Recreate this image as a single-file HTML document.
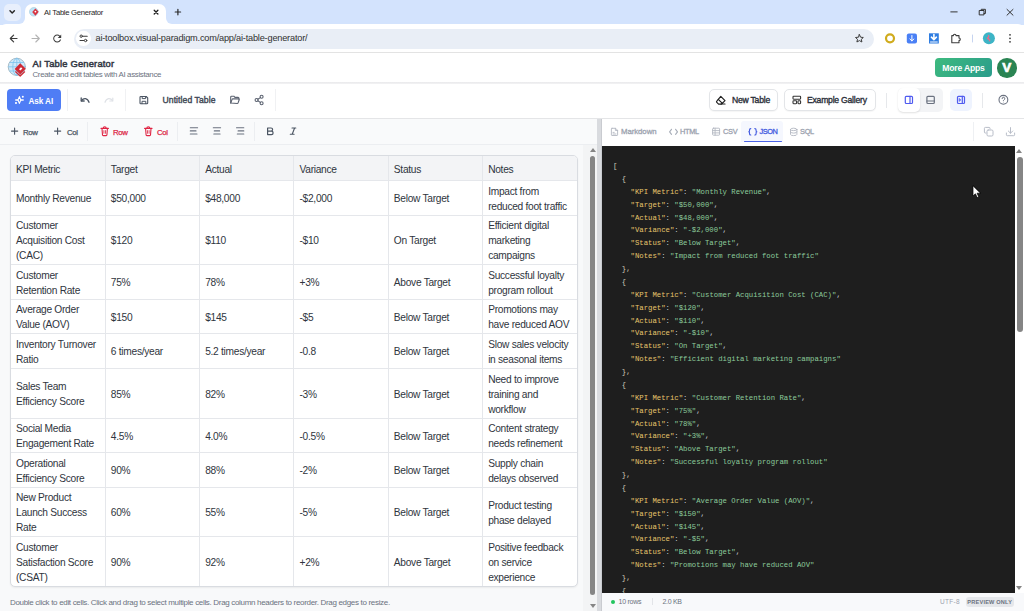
<!DOCTYPE html>
<html><head><meta charset="utf-8">
<style>
*{box-sizing:border-box;margin:0;padding:0}
html,body{width:1024px;height:611px;overflow:hidden;background:#fff;font-family:"Liberation Sans",sans-serif;color:#1f2937}
.abs{position:absolute}
svg{display:block}
/* chrome */
#tabstrip{left:0;top:0;width:1024px;height:25px;background:#d3e3fd}
#tabdd{left:4px;top:4px;width:16.5px;height:16.5px;border-radius:5px;background:#e8effc}
#tab{left:25px;top:4px;width:141px;height:20px;background:#fff;border-radius:7px 7px 0 0}
#tabtitle{left:44px;top:7.5px;font-size:7.7px;letter-spacing:-.3px;color:#1f1f1f;white-space:nowrap}
#toolbar{left:0;top:24px;width:1024px;height:28px;background:#fff;border-radius:6px 6px 0 0}
#omni{left:74px;top:29px;width:800px;height:19.5px;border-radius:10px;background:#e9eef6}
#url{left:95.5px;top:33px;font-size:9.2px;letter-spacing:-.2px;color:#303030;white-space:nowrap}
#chromeline{left:0;top:52px;width:1024px;height:1px;background:#e3e3e3}
/* app header */
#appheader{left:0;top:53px;width:1024px;height:29px;background:#fff}
#hdrshadow{left:0;top:82px;width:1024px;height:2px;background:linear-gradient(#e9e9eb,#f3f3f4)}
#title{left:32.5px;top:58px;font-size:9.4px;letter-spacing:.18px;font-weight:normal;-webkit-text-stroke:.5px currentColor;color:#343a46;white-space:nowrap}
#subtitle{left:32.5px;top:69.5px;font-size:7.9px;letter-spacing:-.33px;color:#6b7280;white-space:nowrap}
#moreapps{left:935px;top:58px;width:57px;height:19px;border-radius:4px;background:linear-gradient(135deg,#3dba7e,#2a9c8c);color:#fff;font-size:8.6px;letter-spacing:-.2px;font-weight:bold;text-align:center;line-height:20.5px}
#avatar{left:997px;top:58px;width:19.5px;height:19.5px;border-radius:50%;background:#2e8654;color:#fff;font-weight:bold;font-size:13.5px;-webkit-text-stroke:.7px #fff;text-align:center;line-height:20.5px;background:#2a8453}
/* app toolbar */
#apptb{left:0;top:84px;width:1024px;height:33.5px;background:#fff}
#tbline{left:0;top:117.5px;width:1024px;height:1px;background:#e4e5e7}
#askai{left:7px;top:89px;width:54px;height:22px;border-radius:4px;background:#4f7df5;color:#fff;font-size:8.2px;letter-spacing:-.1px;font-weight:bold;line-height:25px;padding-left:21.5px}
.vsep{width:1px;background:#eceef1}
.btnw{height:21.5px;border:1px solid #e3e5e8;border-radius:5px;background:#fff;box-shadow:0 1px 1px rgba(0,0,0,.04);font-size:8.6px;letter-spacing:-.22px;font-weight:normal;-webkit-text-stroke:.35px currentColor;color:#2b303a;line-height:21px;white-space:nowrap}
/* left panel */
#lefttb{left:0;top:118.5px;width:597px;height:26px;background:#f9fafb}
#lefttbline{left:0;top:144px;width:597px;height:1px;background:#eceef1}
#leftbody{left:0;top:145px;width:597px;height:466px;background:#f8f9fa}
.tbt{font-size:7.8px;letter-spacing:-.3px;font-weight:normal;-webkit-text-stroke:.25px currentColor;color:#4b5563;white-space:nowrap;top:127.5px}
.tbr{color:#dc2645}
/* table */
#tbl{left:10px;top:155px;width:568px;border:1px solid #d9dce1;border-radius:5px;overflow:hidden;background:#fff;box-shadow:0 1px 2px rgba(0,0,0,.06)}
table{border-collapse:collapse;table-layout:fixed;width:566px}
td,th{font-size:10.2px;letter-spacing:-.28px;color:#2f3540;font-weight:normal;text-align:left;vertical-align:middle;padding:2px 0 0 5px;border-right:1px solid #e5e7eb;border-bottom:1px solid #e5e7eb;white-space:nowrap;line-height:15px;overflow:hidden}
td:last-child,th:last-child{border-right:none}
tr:last-child td{border-bottom:none}
th{background:#f3f4f6;color:#2f3540}
#foot{left:10px;top:598px;font-size:8px;letter-spacing:-.32px;color:#6b7280;white-space:nowrap}
/* scrollbars */
.sthumb{background:#858585;border-radius:3px}
.sarrow{width:0;height:0;border-left:3.5px solid transparent;border-right:3.5px solid transparent}
#divider{left:597px;top:118.5px;width:5px;height:492.5px;background:#d9dbdf;border-right:1px solid #c9cbd0}
/* right panel */
#righthdr{left:602px;top:118.5px;width:422px;height:27.5px;background:#fff}
.tab{top:126.6px;font-size:7.8px;letter-spacing:-.06px;font-weight:normal;-webkit-text-stroke:.3px currentColor;color:#9ca3af;white-space:nowrap}
#code{left:602px;top:146px;width:413px;height:447px;background:#1e1e1e;overflow:hidden}
#rscroll{left:1015px;top:146px;width:9px;height:447px;background:#fff}
pre{position:absolute;left:11px;top:14px;transform:scaleX(.936);transform-origin:0 0;font-family:"Liberation Mono",monospace;font-size:7.8px;line-height:12.88px;color:#d4d4d4}
.k{color:#e6c56c}
.s{color:#8ccb9b}
.p{color:#c9ced6}
.b{color:#cfcab8}
#status{left:602px;top:593px;width:422px;height:18px;background:#f8f9fb}
</style></head><body>
<!-- CHROME -->
<div id="tabstrip" class="abs"></div>
<div id="tab" class="abs"></div>
<div class="abs" style="left:19px;top:18px;width:7px;height:6px;background:#fff"></div><div class="abs" style="left:13px;top:12px;width:12px;height:12px;border-radius:50%;background:#d3e3fd"></div>
<div class="abs" style="left:165px;top:18px;width:7px;height:6px;background:#fff"></div><div class="abs" style="left:166px;top:12px;width:12px;height:12px;border-radius:50%;background:#d3e3fd"></div>
<div id="tabdd" class="abs"></div>
<div id="tabtitle" class="abs">AI Table Generator</div>
<div id="toolbar" class="abs"></div>
<div id="omni" class="abs"></div>
<div id="url" class="abs">ai-toolbox.visual-paradigm.com/app/ai-table-generator/</div>
<div id="chromeline" class="abs"></div>

<!-- APP HEADER -->
<div id="appheader" class="abs"></div>
<div id="hdrshadow" class="abs"></div>
<div id="title" class="abs">AI Table Generator</div>
<div id="subtitle" class="abs">Create and edit tables with AI assistance</div>
<div id="moreapps" class="abs">More Apps</div>
<div id="avatar" class="abs">V</div>

<!-- APP TOOLBAR -->
<div id="apptb" class="abs"></div>
<div id="tbline" class="abs"></div>
<div id="askai" class="abs">Ask AI</div>
<div class="abs vsep" style="left:66.5px;top:89px;height:22px;background:#f0f1f3"></div>
<div class="abs vsep" style="left:125px;top:89px;height:22px;background:#f0f1f3"></div>
<div class="abs" style="left:162.5px;top:95.3px;font-size:8.6px;letter-spacing:.08px;font-weight:normal;-webkit-text-stroke:.4px currentColor;color:#434a57;white-space:nowrap">Untitled Table</div>
<div class="abs vsep" style="left:275px;top:89px;height:22px;background:#f0f1f3"></div>
<div class="abs btnw" style="left:709px;top:89px;width:69px;padding-left:22px">New Table</div>
<div class="abs btnw" style="left:784px;top:89px;width:92px;padding-left:22px">Example Gallery</div>
<div class="abs vsep" style="left:886px;top:92.5px;height:15px;background:#e6e8eb"></div>
<div class="abs" style="left:897.5px;top:88px;width:45px;height:23.5px;border-radius:5px;background:#f3f4f6"></div>
<div class="abs" style="left:897.5px;top:88px;width:22.5px;height:23.5px;border-radius:5px;background:#fff;box-shadow:0 1px 2px rgba(0,0,0,.12)"></div>
<div class="abs" style="left:950px;top:89px;width:22px;height:22px;border-radius:5px;background:#eef3fe"></div>
<div class="abs vsep" style="left:982px;top:92.5px;height:15px;background:#e6e8eb"></div>

<!-- LEFT PANEL -->
<div id="lefttb" class="abs"></div>
<div id="lefttbline" class="abs"></div>
<div id="leftbody" class="abs"></div>
<div class="abs tbt" style="left:23px">Row</div>
<div class="abs tbt" style="left:67px">Col</div>
<div class="abs vsep" style="left:87px;top:122px;height:19px"></div>
<div class="abs tbt tbr" style="left:113px">Row</div>
<div class="abs tbt tbr" style="left:157px">Col</div>
<div class="abs vsep" style="left:177px;top:122px;height:19px"></div>
<div class="abs vsep" style="left:254px;top:122px;height:19px"></div>

<div id="tbl" class="abs">
<table>
<tr style="height:24.5px"><th>KPI Metric</th><th>Target</th><th>Actual</th><th>Variance</th><th>Status</th><th>Notes</th></tr>
<tr style="height:34.5px"><td>Monthly Revenue</td><td>$50,000</td><td>$48,000</td><td>-$2,000</td><td>Below Target</td><td>Impact from<br>reduced foot traffic</td></tr>
<tr style="height:49px"><td>Customer<br>Acquisition Cost<br>(CAC)</td><td>$120</td><td>$110</td><td>-$10</td><td>On Target</td><td>Efficient digital<br>marketing<br>campaigns</td></tr>
<tr style="height:35px"><td>Customer<br>Retention Rate</td><td>75%</td><td>78%</td><td>+3%</td><td>Above Target</td><td>Successful loyalty<br>program rollout</td></tr>
<tr style="height:34px"><td>Average Order<br>Value (AOV)</td><td>$150</td><td>$145</td><td>-$5</td><td>Below Target</td><td>Promotions may<br>have reduced AOV</td></tr>
<tr style="height:35px"><td>Inventory Turnover<br>Ratio</td><td>6 times/year</td><td>5.2 times/year</td><td>-0.8</td><td>Below Target</td><td>Slow sales velocity<br>in seasonal items</td></tr>
<tr style="height:50px"><td>Sales Team<br>Efficiency Score</td><td>85%</td><td>82%</td><td>-3%</td><td>Below Target</td><td>Need to improve<br>training and<br>workflow</td></tr>
<tr style="height:34px"><td>Social Media<br>Engagement Rate</td><td>4.5%</td><td>4.0%</td><td>-0.5%</td><td>Below Target</td><td>Content strategy<br>needs refinement</td></tr>
<tr style="height:35px"><td>Operational<br>Efficiency Score</td><td>90%</td><td>88%</td><td>-2%</td><td>Below Target</td><td>Supply chain<br>delays observed</td></tr>
<tr style="height:49.5px"><td>New Product<br>Launch Success<br>Rate</td><td>60%</td><td>55%</td><td>-5%</td><td>Below Target</td><td>Product testing<br>phase delayed</td></tr>
<tr style="height:49.5px"><td>Customer<br>Satisfaction Score<br>(CSAT)</td><td>90%</td><td>92%</td><td>+2%</td><td>Above Target</td><td>Positive feedback<br>on service<br>experience</td></tr>
</table>
</div>
<div id="foot" class="abs">Double click to edit cells. Click and drag to select multiple cells. Drag column headers to reorder. Drag edges to resize.</div>
<div class="abs" style="left:583px;top:145px;width:14px;height:466px;background:#f3f4f5"></div>
<div class="abs sthumb" style="left:590px;top:156px;width:5.3px;height:439px"></div>
<div class="abs sarrow" style="left:589.5px;top:148px;border-bottom:4px solid #858585;border-left-width:3px;border-right-width:3px"></div>
<div class="abs sarrow" style="left:589.5px;top:604.3px;border-top:4px solid #858585;border-left-width:3px;border-right-width:3px"></div>
<div id="divider" class="abs"></div>

<!-- RIGHT PANEL -->
<div id="righthdr" class="abs"></div>
<div class="abs tab" style="left:621px">Markdown</div>
<div class="abs tab" style="left:680px;font-size:7.4px;letter-spacing:-.3px;top:127px">HTML</div>
<div class="abs tab" style="left:723px;font-size:7.4px;letter-spacing:-.3px;top:127px">CSV</div>
<div class="abs" style="left:741px;top:120.5px;width:42px;height:21px;background:#f5f7fe;border-radius:3px 3px 0 0"></div>
<div class="abs" style="left:743.5px;top:140.5px;width:38.5px;height:1.6px;background:#4a63e7;border-radius:1px"></div>
<div class="abs tab" style="left:759.5px;color:#4159e0;font-size:7.4px;letter-spacing:-.45px;top:127px">JSON</div>
<div class="abs tab" style="left:800px;font-size:7.4px;letter-spacing:-.3px;top:127px">SQL</div>
<div class="abs vsep" style="left:973px;top:122px;height:19px;background:#eef0f3"></div>

<div id="code" class="abs"><pre id="pre"><span class="b">[</span>
  <span class="b">{</span>
    <span class="k">"KPI Metric"</span><span class="p">:</span> <span class="s">"Monthly Revenue"</span><span class="p">,</span>
    <span class="k">"Target"</span><span class="p">:</span> <span class="s">"$50,000"</span><span class="p">,</span>
    <span class="k">"Actual"</span><span class="p">:</span> <span class="s">"$48,000"</span><span class="p">,</span>
    <span class="k">"Variance"</span><span class="p">:</span> <span class="s">"-$2,000"</span><span class="p">,</span>
    <span class="k">"Status"</span><span class="p">:</span> <span class="s">"Below Target"</span><span class="p">,</span>
    <span class="k">"Notes"</span><span class="p">:</span> <span class="s">"Impact from reduced foot traffic"</span>
  <span class="b">},</span>
  <span class="b">{</span>
    <span class="k">"KPI Metric"</span><span class="p">:</span> <span class="s">"Customer Acquisition Cost (CAC)"</span><span class="p">,</span>
    <span class="k">"Target"</span><span class="p">:</span> <span class="s">"$120"</span><span class="p">,</span>
    <span class="k">"Actual"</span><span class="p">:</span> <span class="s">"$110"</span><span class="p">,</span>
    <span class="k">"Variance"</span><span class="p">:</span> <span class="s">"-$10"</span><span class="p">,</span>
    <span class="k">"Status"</span><span class="p">:</span> <span class="s">"On Target"</span><span class="p">,</span>
    <span class="k">"Notes"</span><span class="p">:</span> <span class="s">"Efficient digital marketing campaigns"</span>
  <span class="b">},</span>
  <span class="b">{</span>
    <span class="k">"KPI Metric"</span><span class="p">:</span> <span class="s">"Customer Retention Rate"</span><span class="p">,</span>
    <span class="k">"Target"</span><span class="p">:</span> <span class="s">"75%"</span><span class="p">,</span>
    <span class="k">"Actual"</span><span class="p">:</span> <span class="s">"78%"</span><span class="p">,</span>
    <span class="k">"Variance"</span><span class="p">:</span> <span class="s">"+3%"</span><span class="p">,</span>
    <span class="k">"Status"</span><span class="p">:</span> <span class="s">"Above Target"</span><span class="p">,</span>
    <span class="k">"Notes"</span><span class="p">:</span> <span class="s">"Successful loyalty program rollout"</span>
  <span class="b">},</span>
  <span class="b">{</span>
    <span class="k">"KPI Metric"</span><span class="p">:</span> <span class="s">"Average Order Value (AOV)"</span><span class="p">,</span>
    <span class="k">"Target"</span><span class="p">:</span> <span class="s">"$150"</span><span class="p">,</span>
    <span class="k">"Actual"</span><span class="p">:</span> <span class="s">"$145"</span><span class="p">,</span>
    <span class="k">"Variance"</span><span class="p">:</span> <span class="s">"-$5"</span><span class="p">,</span>
    <span class="k">"Status"</span><span class="p">:</span> <span class="s">"Below Target"</span><span class="p">,</span>
    <span class="k">"Notes"</span><span class="p">:</span> <span class="s">"Promotions may have reduced AOV"</span>
  <span class="b">},</span>
  <span class="b">{</span>
    <span class="k">"KPI Metric"</span><span class="p">:</span> <span class="s">"Inventory Turnover Ratio"</span><span class="p">,</span>
    <span class="k">"Target"</span><span class="p">:</span> <span class="s">"6 times/year"</span><span class="p">,</span></pre></div>
<div id="rscroll" class="abs"></div>
<div class="abs sthumb" style="left:1017px;top:157px;width:5.5px;height:174.5px"></div>
<div class="abs sarrow" style="left:1016px;top:149px;border-bottom:4px solid #858585"></div>
<div class="abs sarrow" style="left:1016px;top:586px;border-top:4px solid #858585"></div>

<div id="status" class="abs"></div>
<div class="abs" style="left:611px;top:600px;width:4px;height:4px;border-radius:50%;background:#22c55e"></div>
<div class="abs" style="left:618.5px;top:598.3px;font-size:7px;letter-spacing:-.25px;color:#6b7280;white-space:nowrap">10 rows</div>
<div class="abs" style="left:652px;top:598px;width:1px;height:7px;background:#e2e4e8"></div>
<div class="abs" style="left:662.5px;top:598.3px;font-size:7px;letter-spacing:-.32px;color:#6b7280;white-space:nowrap">2.0 KB</div>
<div class="abs" style="left:940px;top:597.5px;font-size:6.5px;color:#9ca3af;white-space:nowrap;letter-spacing:.3px">UTF-8</div>
<div class="abs" style="left:965.5px;top:597px;width:48.5px;height:10px;border-radius:3px;background:#e5e7eb;font-size:5.6px;font-weight:bold;color:#6b7280;text-align:center;line-height:10px;letter-spacing:.2px">PREVIEW ONLY</div>


<svg class="abs" style="left:0;top:0;pointer-events:none" width="1024" height="611" viewBox="0 0 1024 611">
<g fill="none" stroke-linecap="round" stroke-linejoin="round">
<!-- chrome tab strip -->
<path d="M10 10.8 L12.2 13 L14.4 10.8" stroke="#2a2a2a" stroke-width="1.5"/>
<circle cx="33.8" cy="11.8" r="4.3" fill="#bfe3f7" stroke="#9cc7dc" stroke-width=".6"/>
<path d="M35.4 8.6 L38.6 11.8 L35.4 15.8 L32.2 12 Z" fill="#d8333f"/>
<circle cx="35.4" cy="11.6" r=".9" fill="#fff"/>
<path d="M154.2 10.3 L157.9 14 M157.9 10.3 L154.2 14" stroke="#1f1f1f" stroke-width="1.3"/>
<path d="M177.9 9.3 V14.8 M175.2 12 H180.6" stroke="#2a2a2a" stroke-width="1.2"/>
<path d="M950.8 11.9 H957.2" stroke="#333" stroke-width="1"/>
<path d="M979.6 10.5 h4.4 v4.4 h-4.4 z M981.2 10.5 v-1.2 h4.2 v4.2 h-1.4" stroke="#333" stroke-width="1"/>
<path d="M1007 9.4 L1013 15.2 M1013 9.4 L1007 15.2" stroke="#333" stroke-width="1"/>
<!-- toolbar -->
<path d="M17 38.5 H10.3 M13.6 35.2 L10.3 38.5 L13.6 41.8" stroke="#3c3c3c" stroke-width="1.2"/>
<path d="M32 38.5 H39.2 M35.8 35 L39.3 38.5 L35.8 42" stroke="#b3b3b3" stroke-width="1.1"/>
<path transform="translate(51.2,32.6) scale(0.5)" d="M17.65 6.35A7.958 7.958 0 0 0 12 4c-4.42 0-7.99 3.58-7.99 8s3.57 8 7.99 8c3.73 0 6.84-2.55 7.73-6h-2.08A5.99 5.99 0 0 1 12 18c-3.31 0-6-2.69-6-6s2.69-6 6-6c1.66 0 3.14.69 4.22 1.78L13 11h7V4l-2.35 2.35z" fill="#3c3c3c" stroke="none"/>
<circle cx="83.5" cy="38.3" r="7.6" fill="#fff"/>
<path d="M83.2 36.2 H87.2 M80 40.5 H83.6" stroke="#3c3c3c" stroke-width="1.1"/>
<circle cx="81.2" cy="36.2" r="1.2" stroke="#3c3c3c" stroke-width="1"/>
<circle cx="85.6" cy="40.5" r="1.2" stroke="#3c3c3c" stroke-width="1"/>
<path d="M859.4 34.6 L860.6 37.2 L863.3 37.5 L861.3 39.3 L861.9 42 L859.4 40.6 L856.9 42 L857.5 39.3 L855.5 37.5 L858.2 37.2 Z" stroke="#3c3c3c" stroke-width="1"/>
<circle cx="890" cy="38.3" r="4" stroke="#d0ab1c" stroke-width="2.2"/>
<rect x="906.8" y="33.4" width="10.2" height="10" rx="2" fill="#4a80f5"/>
<path d="M911.9 35.5 V40.8 M909.9 39 L911.9 40.9 L913.9 39" stroke="#fff" stroke-width="1"/>
<rect x="929" y="33.3" width="9.8" height="10.2" fill="#2f7de1"/>
<path d="M933.9 34.5 V39.3 M931.4 37.2 L933.9 39.6 L936.4 37.2" stroke="#fff" stroke-width="1.6"/>
<path d="M930.5 42 H937.3" stroke="#fff" stroke-width="1"/>
<path d="M951.8 35.6 h1.6 a1.3 1.3 0 0 1 2.6 0 h3 v2.4 a1.3 1.3 0 0 1 0 2.6 v2.2 h-7.2 z" stroke="#3c3c3c" stroke-width="1.1"/>
<path d="M972.5 35 V42" stroke="#c6d4f0" stroke-width="1"/>
<circle cx="988.9" cy="38.3" r="6" fill="#3db4c6"/>
<path d="M988 34.8 q2.2 .6 1.4 2.2 q-1.6 1 .6 2.2 q1.2 1.6 -1.4 2.4 q1.2 -1.6 -1.2 -2.4 q-1.4 -1.6 .6 -2.4 z" fill="#e86b8a"/>
<circle cx="1010" cy="34.8" r=".9" fill="#3c3c3c"/>
<circle cx="1010" cy="38.3" r=".9" fill="#3c3c3c"/>
<circle cx="1010" cy="41.8" r=".9" fill="#3c3c3c"/>
<!-- app logo -->
<circle cx="16.8" cy="66.8" r="8.6" fill="#cfe9fa" stroke="#a9bcc6" stroke-width="1"/>
<path d="M8.5 66.8 H25 M16.8 58.3 V75.3 M10 62.5 H23.6 M10 71 H23.6" stroke="#7cc3ee" stroke-width=".8"/>
<ellipse cx="16.8" cy="66.8" rx="4" ry="8.4" stroke="#7cc3ee" stroke-width=".8"/>
<path d="M20.2 63.2 L25.8 68.8 L20.2 74.6 L14.6 69 Z" fill="#cf2a35"/>
<path d="M19 69.2 L21 67.2 L22.4 68.6 L20.4 70.6 Z" fill="#fff"/>
<path d="M15.6 71.8 L20.2 76 L24.6 71.8" stroke="#cf2a35" stroke-width="1.2"/>
<!-- ask ai sparkle -->
<path d="M19.4 96.6 L20.8 100 L19.4 103.4 L18 100 Z" stroke="#fff" stroke-width="1.1"/>
<path d="M15.3 100 H18 M20.8 100 H23.7" stroke="#fff" stroke-width="1.4" stroke-linecap="butt"/>
<circle cx="22.8" cy="96.8" r="1" fill="#fff"/>
<circle cx="16" cy="103" r="1.05" fill="#fff"/>
<!-- undo redo -->
<path d="M81.2 98 L81.2 101 L84.2 101" stroke="#4b5563" stroke-width="1.3"/>
<path d="M81.5 100.7 C83.5 97.8 87.5 97.6 89 102.3" stroke="#4b5563" stroke-width="1.3"/>
<path d="M112.8 98 L112.8 101 L109.8 101" stroke="#dfe2e7" stroke-width="1.2"/>
<path d="M112.5 100.7 C110.5 97.8 106.5 97.6 105 102.3" stroke="#dfe2e7" stroke-width="1.2"/>
<!-- save -->
<path d="M140.8 96.5 h5.4 l1.5 1.5 v5 a.8 .8 0 0 1 -.8 .8 h-6.1 a.8 .8 0 0 1 -.8 -.8 v-5.7 a.8 .8 0 0 1 .8 -.8 z" stroke="#4b5563" stroke-width="1.1"/>
<path d="M142.2 96.6 v2 h3.4 v-2 M142 103.7 v-2.4 h3.8 v2.4" stroke="#4b5563" stroke-width="1"/>
<!-- folder -->
<path d="M230.7 103 V97 a.8 .8 0 0 1 .8 -.8 h2.4 l1 1.2 h3.2 a.8 .8 0 0 1 .8 .8 v.8" stroke="#5b6270" stroke-width="1.1"/>
<path d="M230.7 103 l1.4 -3.6 a.8 .8 0 0 1 .7 -.5 h5.8 a.6 .6 0 0 1 .6 .8 l-1.2 3.3 a.8 .8 0 0 1 -.7 .5 z" stroke="#5b6270" stroke-width="1.1"/>
<!-- share -->
<circle cx="256.6" cy="100" r="1.5" stroke="#5b6270" stroke-width="1.1"/>
<circle cx="261.6" cy="96.8" r="1.5" stroke="#5b6270" stroke-width="1.1"/>
<circle cx="261.6" cy="103.2" r="1.5" stroke="#5b6270" stroke-width="1.1"/>
<path d="M257.9 99.2 L260.3 97.6 M257.9 100.8 L260.3 102.4" stroke="#5b6270" stroke-width="1.1"/>
<!-- eraser -->
<path d="M720.8 96.4 L725 100.6 L721.3 104.2 H718.6 L716.8 102.4 a.9 .9 0 0 1 0 -1.3 Z" stroke="#222" stroke-width="1.2"/>
<path d="M718.3 99.3 L722.4 103.4 M721 104 H725" stroke="#222" stroke-width="1.2"/>
<!-- gallery -->
<rect x="793" y="96.3" width="7.6" height="2.9" rx=".6" stroke="#333" stroke-width="1.1"/>
<rect x="793" y="100.8" width="3.6" height="2.9" rx=".6" stroke="#333" stroke-width="1.1"/>
<rect x="798" y="100.8" width="2.6" height="2.9" rx=".6" stroke="#333" stroke-width="1.1"/>
<!-- layout icons -->
<rect x="905.3" y="96.3" width="7.2" height="7.2" rx="1" stroke="#4f5bf0" stroke-width="1.2"/>
<path d="M910 96.3 V103.5" stroke="#4f5bf0" stroke-width="1.2"/>
<rect x="926.9" y="96.3" width="7.4" height="7.2" rx="1" stroke="#6b7280" stroke-width="1.2"/>
<path d="M926.9 101 H934.3" stroke="#6b7280" stroke-width="1.2"/>
<rect x="957.5" y="96.3" width="7" height="7.2" rx="1" stroke="#4f5bf0" stroke-width="1.2"/>
<path d="M962.3 96.3 V103.5" stroke="#4f5bf0" stroke-width="1.2"/>
<path d="M959.4 98.6 L960.8 99.9 L959.4 101.2 Z" fill="#4f5bf0" stroke="#4f5bf0" stroke-width=".6"/>
<!-- help -->
<circle cx="1003.4" cy="99.8" r="4.4" stroke="#6b7280" stroke-width="1.1"/>
<path d="M1002.1 98.6 a1.35 1.35 0 1 1 1.9 1.2 q-.6 .3 -.6 .9" stroke="#6b7280" stroke-width="1"/>
<circle cx="1003.4" cy="102.1" r=".45" fill="#6b7280"/>
<!-- left toolbar -->
<path d="M14.6 128 V134.2 M11.5 131.1 H17.7" stroke="#4b5563" stroke-width="1.1"/>
<path d="M57.6 128 V134.2 M54.5 131.1 H60.7" stroke="#4b5563" stroke-width="1.1"/>
<path d="M101 128.4 H108.4 M103.2 128.2 a1.5 1.5 0 0 1 3 0 M102 128.6 l.5 6.4 a.7 .7 0 0 0 .7 .6 h3 a.7 .7 0 0 0 .7 -.6 l.5 -6.4" stroke="#e02443" stroke-width="1.1"/>
<path d="M103.9 130.6 v2.7 M105.5 130.6 v2.7" stroke="#e02443" stroke-width=".8"/>
<path d="M144.6 128.4 H152 M146.8 128.2 a1.5 1.5 0 0 1 3 0 M145.6 128.6 l.5 6.4 a.7 .7 0 0 0 .7 .6 h3 a.7 .7 0 0 0 .7 -.6 l.5 -6.4" stroke="#e02443" stroke-width="1.1"/>
<path d="M147.5 130.6 v2.7 M149.1 130.6 v2.7" stroke="#e02443" stroke-width=".8"/>
<path d="M190.3 127.8 H197.6 M190.3 130.9 H196 M190.3 134 H197" stroke="#6b7280" stroke-width="1.1"/>
<path d="M213.3 127.8 H220.6 M214.3 130.9 H219.6 M213.8 134 H220.1" stroke="#6b7280" stroke-width="1.1"/>
<path d="M236.5 127.8 H243.8 M238.1 130.9 H243.8 M237.3 134 H243.8" stroke="#6b7280" stroke-width="1.1"/>
<path d="M267.6 128 h3.4 a1.6 1.6 0 0 1 0 3.2 h-3.4 z M267.6 131.2 h3.8 a1.7 1.7 0 0 1 0 3.4 h-3.8 z" stroke="#4b5563" stroke-width="1.2"/>
<path d="M292 128 h3.8 M290.3 134.3 h3.8 M294.6 128 l-2.4 6.3" stroke="#4b5563" stroke-width="1.1"/>
<!-- right tabs -->
<path d="M612 128.3 h3.6 l2 2 v4.6 a.6 .6 0 0 1 -.6 .6 h-5 a.6 .6 0 0 1 -.6 -.6 v-6 a.6 .6 0 0 1 .6 -.6 z M615.4 128.3 v2.2 h2.2 M613 132.4 h1.2 M613 134 h3" stroke="#b3b8c2" stroke-width=".9"/>
<path d="M671.5 129.3 L669.6 131.8 L671.5 134.3 M675.6 129.3 L677.5 131.8 L675.6 134.3" stroke="#a7adb8" stroke-width="1.1"/>
<rect x="712.6" y="128.2" width="7" height="7" rx=".8" stroke="#b3b8c2" stroke-width=".9"/>
<path d="M712.6 130.6 H719.6 M712.6 132.9 H719.6 M715.1 128.2 V135.2" stroke="#b3b8c2" stroke-width=".9"/>
<path d="M750.8 128.6 q-1.3 0 -1.3 1.3 v1 q0 .9 -.8 .9 q.8 0 .8 .9 v1 q0 1.3 1.3 1.3 M754.8 128.6 q1.3 0 1.3 1.3 v1 q0 .9 .8 .9 q-.8 0 -.8 .9 v1 q0 1.3 -1.3 1.3" stroke="#4159e0" stroke-width="1.1"/>
<ellipse cx="793.7" cy="129.4" rx="3.2" ry="1.2" stroke="#b3b8c2" stroke-width=".9"/>
<path d="M790.5 129.4 v5 a3.2 1.2 0 0 0 6.4 0 v-5 M790.5 131.9 a3.2 1.2 0 0 0 6.4 0" stroke="#b3b8c2" stroke-width=".9"/>
<!-- copy / download -->
<rect x="987" y="130" width="6" height="6" rx="1.2" stroke="#b8bdc8" stroke-width="1"/>
<path d="M986 133 h-.6 a1 1 0 0 1 -1 -1 v-3.6 a1 1 0 0 1 1 -1 h3.6 a1 1 0 0 1 1 1 v.6" stroke="#b8bdc8" stroke-width="1"/>
<path d="M1010.5 127.6 V133.2 M1008.3 131 L1010.5 133.2 L1012.7 131 M1006.4 133 v1.8 a.9 .9 0 0 0 .9 .9 h6.4 a.9 .9 0 0 0 .9 -.9 v-1.8" stroke="#b8bdc8" stroke-width="1"/>
<!-- cursor -->
<path d="M973 186 L973 196 L975.4 193.8 L977.2 197.6 L978.8 196.9 L977.1 193.2 L980.3 193.2 Z" fill="#fff" stroke="#000" stroke-width=".7" stroke-linejoin="miter"/>
</g>
</svg>

</body></html>
